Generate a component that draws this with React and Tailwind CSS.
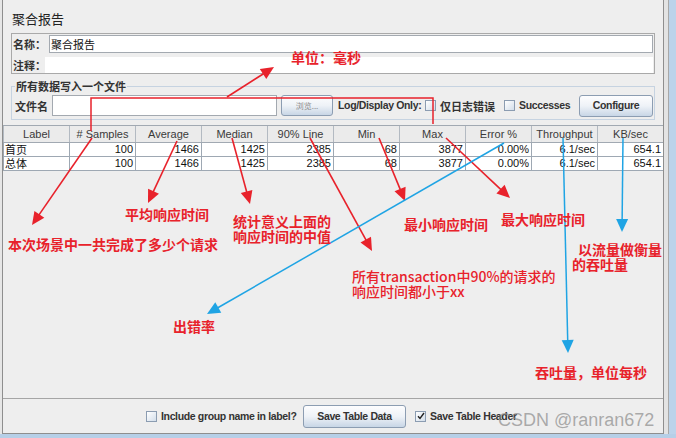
import React from 'react';

const RED = '#e8222b';
const BLUE = '#1fa4e4';

const columns = ['Label', '# Samples', 'Average', 'Median', '90% Line', 'Min', 'Max', 'Error %', 'Throughput', 'KB/sec'];

const rows = [
  ['首页', '100', '1466', '1425', '2385', '68', '3877', '0.00%', '6.1/sec', '654.1'],
  ['总体', '100', '1466', '1425', '2385', '68', '3877', '0.00%', '6.1/sec', '654.1'],
];

const Arrow = ({ x1, y1, x2, y2, color, w = 1.6, len = 13, half = 6 }) => {
  const a = Math.atan2(y2 - y1, x2 - x1);
  const c = Math.cos(a);
  const s = Math.sin(a);
  const bx = x2 - len * c;
  const by = y2 - len * s;
  const pts = `${x2},${y2} ${bx + half * s},${by - half * c} ${bx - half * s},${by + half * c}`;
  return (
    <g>
      <line x1={x1} y1={y1} x2={bx + c} y2={by + s} stroke={color} strokeWidth={w} />
      <polygon points={pts} fill={color} />
    </g>
  );
};

const CheckBox = ({ checked }) => (
  <span className="flex h-[11px] w-[11px] shrink-0 items-center justify-center border border-[#8b9cb1] bg-linear-to-br from-white to-[#d3deea]">
    {checked && (
      <svg width="8" height="8" viewBox="0 0 8 8">
        <path d="M1 4.2 L3 6.5 L7 1" fill="none" stroke="#222" strokeWidth="1.4" />
      </svg>
    )}
  </span>
);

const SwingButton = ({ children, className }) => (
  <div
    className={`flex shrink-0 items-center justify-center rounded-[3px] border border-[#8c9db2] bg-linear-to-b from-[#fdfdfe] via-[#eef2f7] to-[#c8d6e6] ${className}`}
  >
    {children}
  </div>
);

const Note = ({ className, children }) => (
  <div className={`absolute whitespace-nowrap text-[14px] leading-[15px] text-[#e8222b] ${className}`}>
    {children}
  </div>
);

// bold Swing label text
const lbl = 'shrink-0 whitespace-nowrap text-[10.5px] font-bold tracking-[-0.35px] leading-[13px] text-[#333]';
const cjk = "shrink-0 whitespace-nowrap font-['Noto_Sans_CJK_SC',sans-serif] text-[11px] font-semibold leading-[14px] text-[#333]";

export default function App() {
  return (
    <div className="relative flex h-[438px] w-[676px] flex-col overflow-hidden bg-[#eeeeee] font-['Liberation_Sans','Noto_Sans_CJK_SC',sans-serif] text-[#333]">
      <div className="flex h-[434px]">
        <div className="w-[2px] bg-[#e6e6e6]" />
        <div className="flex w-[662px] flex-col border-x border-b border-[#8e8e8e]">
          {/* title */}
          <div className="h-[33px] pl-[9px] pt-[11px] font-['Noto_Sans_CJK_SC',sans-serif] text-[13px] leading-[16px] text-[#222]">
            聚合报告
          </div>

          {/* name / comment */}
          <div className="mx-[8px] flex h-[41px] flex-col border border-[#a9a9a9] px-[1px] text-[11px]">
            <div className="mt-[1px] flex h-[18px] items-center">
              <span className={`w-[36px] ${cjk}`}>名称：</span>
              <div className="flex h-[18px] flex-1 items-center border border-[#a3a9b0] bg-white pl-[1px] font-['Noto_Sans_CJK_SC',sans-serif] leading-[14px] text-[#111]">
                聚合报告
              </div>
            </div>
            <div className="mt-[4px] flex h-[16px] items-center">
              <span className={`w-[32px] ${cjk}`}>注释：</span>
              <div className="h-[16px] flex-1 bg-white" />
            </div>
          </div>

          {/* write results to file */}
          <fieldset className="mx-[8px] mt-[5px] border border-[#c6d3e1]">
            <legend className={`ml-[3px] px-[1px] ${cjk}`}>所有数据写入一个文件</legend>
            <div className="mt-[1px] mb-[2px] flex h-[23px] items-center">
              <span className={`w-[40px] pl-[3px] ${cjk}`}>文件名</span>
              <div className="h-[21px] w-[225px] shrink-0 border border-[#a3a9b0] bg-white" />
              <SwingButton className="ml-[4px] h-[21px] w-[52px]">
                <span className="font-['Noto_Sans_CJK_SC',sans-serif] text-[8px] leading-[10px] text-[#8d8d8d]">浏览...</span>
              </SwingButton>
              <span className={`ml-[5px] w-[87px] ${lbl}`}>Log/Display Only:</span>
              <CheckBox />
              <span className={`ml-[4px] w-[53px] ${cjk}`}>仅日志错误</span>
              <span className="ml-[11px]">
                <CheckBox />
              </span>
              <span className={`ml-[4px] w-[56px] ${lbl}`}>Successes</span>
              <SwingButton className="ml-[4px] h-[22px] w-[74px]">
                <span className={lbl}>Configure</span>
              </SwingButton>
            </div>
          </fieldset>

          {/* table */}
          <div className="mt-[5px] flex flex-col text-[11px]">
            <div className="flex h-[18px] border-y border-[#a1a9b2] bg-[#ebebeb]">
              {columns.map((c) => (
                <div
                  key={c}
                  className="flex w-[66px] items-center justify-center border-l border-[#b3bac2] leading-[13px] text-[#3a3a3a]"
                >
                  {c}
                </div>
              ))}
            </div>
            {rows.map((r, i) => (
              <div key={i} className="flex h-[14px] border-b border-[#9ea8b3] bg-white">
                {r.map((v, j) => (
                  <div
                    key={j}
                    className={`flex w-[66px] items-center border-l border-[#9ea8b3] leading-[13px] text-[#111] ${
                      j === 0 ? "justify-start pl-[1px] font-['Noto_Sans_CJK_SC',sans-serif]" : 'justify-end pr-[2px]'
                    }`}
                  >
                    {v}
                  </div>
                ))}
              </div>
            ))}
          </div>

          <div className="flex-1" />

          {/* bottom bar */}
          <div className="flex h-[35px] items-center justify-center border-t border-[#a5a5a5]">
            <CheckBox />
            <span className={`ml-[4px] w-[138px] ${lbl}`}>Include group name in label?</span>
            <SwingButton className="ml-[4px] h-[23px] w-[103px]">
              <span className={lbl}>Save Table Data</span>
            </SwingButton>
            <span className="ml-[9px]">
              <CheckBox checked />
            </span>
            <span className={`ml-[4px] w-[90px] ${lbl}`}>Save Table Header</span>
          </div>
        </div>
        <div className="w-[5px] border-r border-[#a8a8a8] bg-[#e3e3e3]" />
        <div className="w-[7px] bg-[#bcd3ea]" />
      </div>
      <div className="h-[4px] bg-[#b6cfe7]" />

      {/* annotation arrows */}
      <svg className="pointer-events-none absolute left-0 top-0" width="676" height="438">
        <polyline points="91,131 91,98 433,98 433,124" fill="none" stroke={RED} strokeWidth="1.5" />
        <Arrow x1={227} y1={97} x2={274} y2={67} color={RED} />
        <Arrow x1={92} y1={138} x2={32} y2={225} color={RED} />
        <Arrow x1={177} y1={141} x2={148} y2={203} color={RED} />
        <Arrow x1={232} y1={138} x2={250} y2={204} color={RED} />
        <Arrow x1={310} y1={138} x2={372} y2={251} color={RED} />
        <Arrow x1={379} y1={138} x2={405} y2={201} color={RED} />
        <Arrow x1={446} y1={138} x2={510} y2={198} color={RED} />
        <Arrow x1={504} y1={143} x2={207} y2={314} color={BLUE} w={1.5} />
        <Arrow x1={563} y1={138} x2={568} y2={353} color={BLUE} w={1.5} />
        <Arrow x1={623} y1={138} x2={622} y2={232} color={BLUE} w={1.5} />
      </svg>

      {/* annotation texts */}
      <div className="font-['Noto_Sans_CJK_SC',sans-serif] font-semibold">
        <Note className="left-[291px] top-[50px]">单位：毫秒</Note>
        <Note className="left-[125px] top-[207px]">平均响应时间</Note>
        <Note className="left-[8px] top-[237px]">本次场景中一共完成了多少个请求</Note>
        <Note className="left-[233px] top-[214px]">
          统计意义上面的
          <br />
          响应时间的中值
        </Note>
        <Note className="left-[404px] top-[217px]">最小响应时间</Note>
        <Note className="left-[501px] top-[212px]">最大响应时间</Note>
        <Note className="left-[578px] top-[242px]">以流量做衡量</Note>
        <Note className="left-[572px] top-[257px]">的吞吐量</Note>
        <Note className="left-[352px] top-[269px] font-medium">
          所有transaction中90%的请求的
          <br />
          响应时间都小于xx
        </Note>
        <Note className="left-[173px] top-[319px]">出错率</Note>
        <Note className="left-[535px] top-[365px]">吞吐量，单位每秒</Note>
      </div>

      {/* watermark */}
      <div className="absolute left-[498px] top-[410px] whitespace-nowrap font-['Liberation_Sans',sans-serif] text-[18px] leading-[20px] text-[#8a8a8a]/70">
        CSDN @ranran672
      </div>
    </div>
  );
}
